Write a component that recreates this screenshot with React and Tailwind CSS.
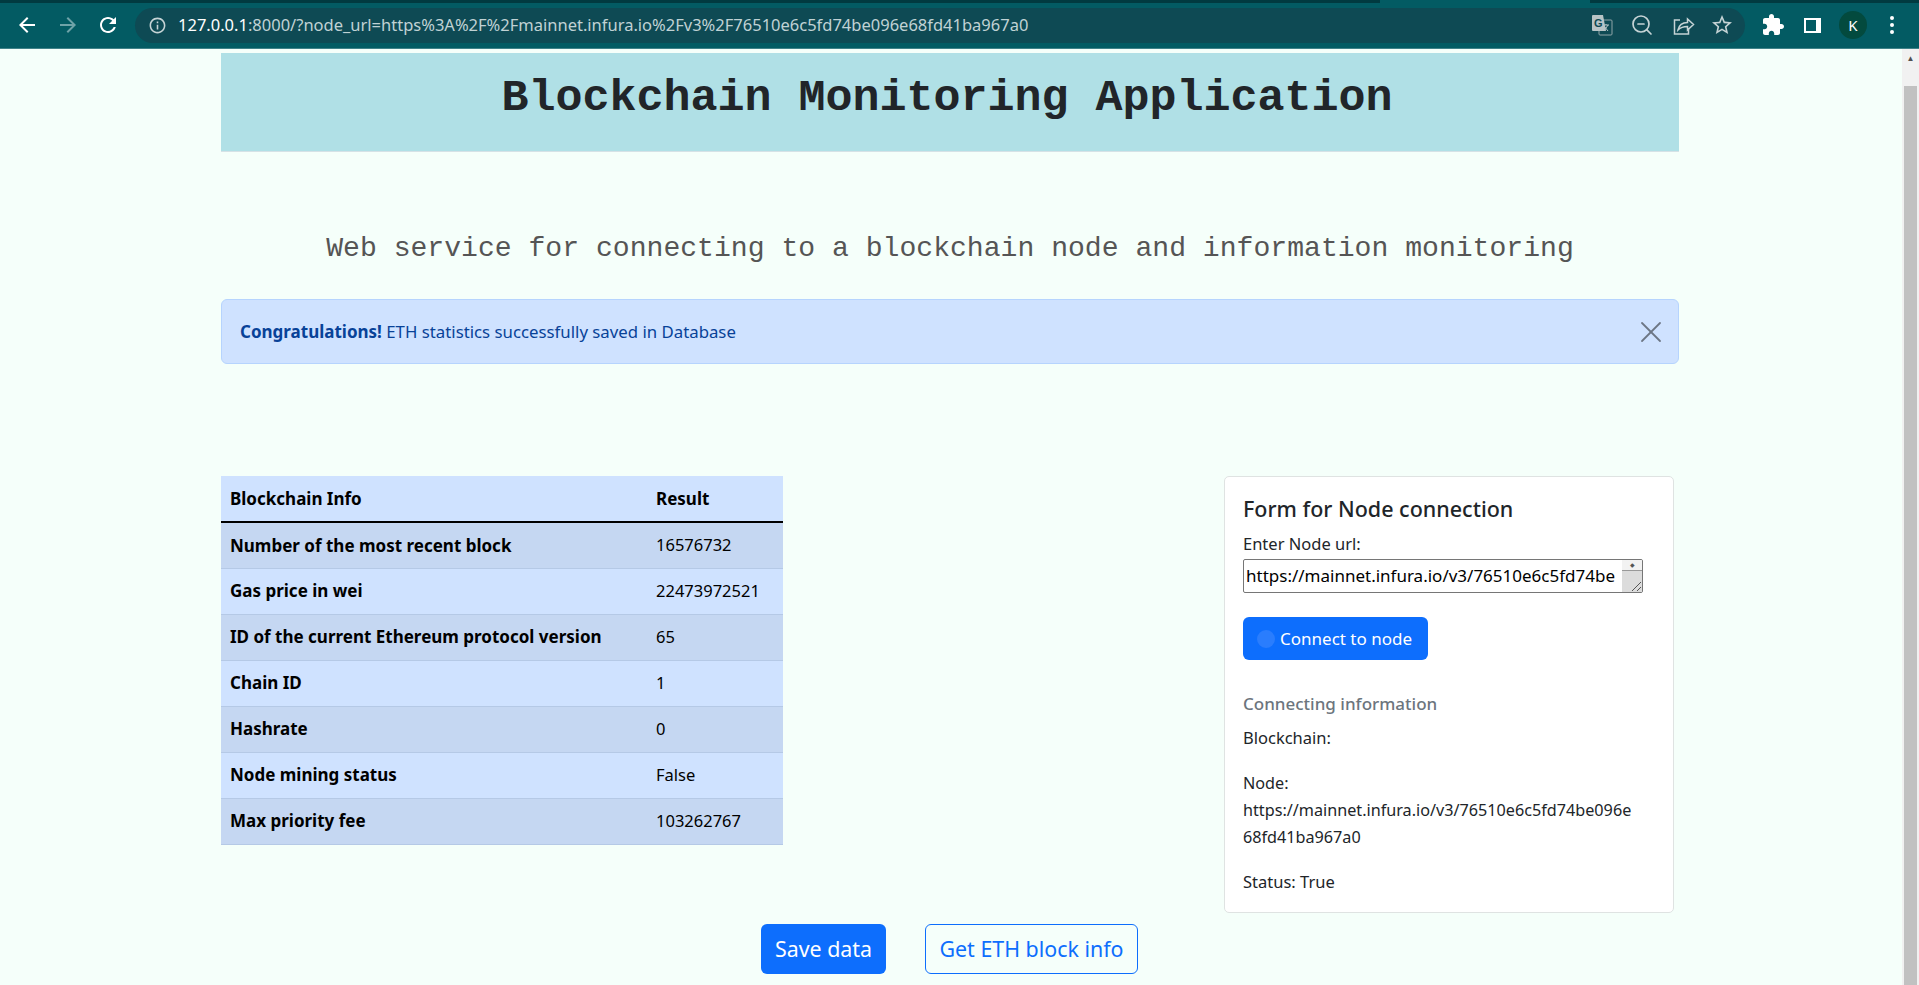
import React from 'react';
import { ZoomOut, X } from 'lucide-react';

const rows = [
    ['Number of the most recent block', '16576732'],
    ['Gas price in wei', '22473972521'],
    ['ID of the current Ethereum protocol version', '65'],
    ['Chain ID', '1'],
    ['Hashrate', '0'],
    ['Node mining status', 'False'],
    ['Max priority fee', '103262767'],
];

const Glyph = ({ d, className }) => (
    <svg viewBox="0 0 24 24" fill="currentColor" className={className}>
        <path d={d} />
    </svg>
);

const TranslateIcon = () => (
    <svg viewBox="0 0 24 24" className="ml-[0px] w-[24px] h-[24px]">
        <rect x="9" y="7" width="13" height="15" rx="1" fill="none" stroke="#8fa5a8" strokeWidth="1" />
        <path d="M13 12h6M16 11v1M14 18l4-6M14 13l4 5" fill="none" stroke="#b5c4c6" strokeWidth="1" />
        <path d="M3 2h10l3 16H3a1 1 0 0 1-1-1V3a1 1 0 0 1 1-1z" fill="#b8c4c6" />
        <text x="4" y="14" fontSize="11" fontWeight="700" fill="#0e4a54" fontFamily="'Liberation Sans', sans-serif">G</text>
    </svg>
);

const ShareIcon = () => (
    <svg viewBox="0 0 24 24" fill="none" stroke="currentColor" strokeWidth="1.5" className="ml-[17px] w-[24px] h-[24px]">
        <path d="M9 7H3.500v14h14v-5" />
        <path d="M7 17c1-5 4.500-7.500 9.500-7.500V6l6 5.500-6 5.500v-3.500c-4 0-7 1-9.500 3.500z" />
    </svg>
);

const Toolbar = () => (
    <div className="h-[49px] shrink-0 bg-[#035b63] flex flex-col border-b border-[#3f8289]">
        <div className="h-[3px] flex">
            <div className="w-[1380px] bg-[#013a40]" />
            <div className="w-[210px]" />
            <div className="flex-1 bg-[#013a40]" />
        </div>
        <div className="h-[40px] mt-[2px] flex items-center text-white">
            <Glyph className="ml-[15px] w-[24px] h-[24px]" d="M20 11H7.830l5.590-5.590L12 4l-8 8 8 8 1.410-1.410L7.830 13H20v-2z" />
            <Glyph className="ml-[17px] w-[24px] h-[24px] text-[#6fa3a8]" d="M12 4l-1.410 1.410L16.170 11H4v2h12.170l-5.580 5.590L12 20l8-8z" />
            <Glyph className="ml-[16px] w-[24px] h-[24px]" d="M17.650 6.350C16.200 4.900 14.210 4 12 4c-4.420 0-7.990 3.580-7.990 8s3.570 8 7.990 8c3.730 0 6.840-2.550 7.730-6h-2.080c-.82 2.330-3.040 4-5.650 4-3.310 0-6-2.690-6-6s2.690-6 6-6c1.660 0 3.140.69 4.220 1.780L13 11h7V4l-2.350 2.350z" />
            <div className="ml-[15px] w-[1610px] h-[35px] rounded-full bg-[#0e4a54] flex items-center pl-[13px] pr-[11px]">
                <Glyph className="w-[19px] h-[19px] text-[#c5d3d5]" d="M11 7h2v2h-2zm0 4h2v6h-2zm1-9C6.480 2 2 6.480 2 12s4.480 10 10 10 10-4.480 10-10S17.520 2 12 2zm0 18c-4.410 0-8-3.590-8-8s3.590-8 8-8 8 3.590 8 8-3.590 8-8 8z" />
                <span className="ml-[11px] text-[16.500px] text-[#c0d2d4]"><span className="text-white">127.0.0.1</span>:8000/?node_url=https%3A%2F%2Fmainnet.infura.io%2Fv3%2F76510e6c5fd74be096e68fd41ba967a0</span>
                <div className="ml-auto flex items-center text-[#c5d3d5]">
                    <TranslateIcon />
                    <ZoomOut className="ml-[16px] w-[24px] h-[24px]" strokeWidth={1.700} />
                    <ShareIcon />
                    <Glyph className="ml-[15px] w-[24px] h-[24px]" d="M22 9.240l-7.190-.62L12 2 9.190 8.630 2 9.240l5.460 4.730L5.820 21 12 17.270 18.180 21l-1.630-7.030L22 9.240zM12 15.400l-3.760 2.270 1-4.280-3.320-2.880 4.380-.38L12 6.100l1.710 4.040 4.380.38-3.320 2.880 1 4.280L12 15.400z" />
                </div>
            </div>
            <Glyph className="ml-[16px] w-[24px] h-[24px]" d="M20.500 11H19V7c0-1.100-.9-2-2-2h-4V3.500C13 2.120 11.880 1 10.500 1S8 2.120 8 3.500V5H4c-1.100 0-1.990.9-1.990 2v3.800H3.500c1.490 0 2.700 1.210 2.700 2.700s-1.210 2.700-2.700 2.700H2V20c0 1.100.9 2 2 2h3.800v-1.500c0-1.490 1.210-2.700 2.700-2.700 1.490 0 2.700 1.210 2.700 2.700V22H17c1.100 0 2-.9 2-2v-4h1.500c1.380 0 2.500-1.120 2.500-2.500S21.880 11 20.500 11z" />
            <div className="ml-[19px] w-[17px] h-[15px] bg-white flex items-center"><div className="w-[10px] h-[11px] ml-[2px] bg-[#035b63]" /></div>
            <div className="ml-[18px] w-[28px] h-[28px] rounded-full bg-[#034a3e] flex items-center justify-center text-[15px]">K</div>
            <div className="ml-[23px] flex flex-col gap-[3px]">
                <span className="w-[4px] h-[4px] rounded-full bg-white" />
                <span className="w-[4px] h-[4px] rounded-full bg-white" />
                <span className="w-[4px] h-[4px] rounded-full bg-white" />
            </div>
        </div>
    </div>
);

const NodeCard = () => (
    <div className="w-[450px] h-[437px] mr-[5px] bg-white border border-[#dfe3e2] rounded-[5px] px-[18px] pt-[20px] text-[16.500px] text-[#212529]">
        <h5 className="text-[21.500px] leading-[24px] font-medium">Form for Node connection</h5>
        <div className="mt-[11px] leading-[24px]">Enter Node url:</div>
        <div className="mt-[3px] w-[400px] h-[34px] border border-[#767676] rounded-[2px] flex items-center pl-[2px] overflow-hidden relative">
            <span className="text-[17px] text-black whitespace-nowrap">https://mainnet.infura.io/v3/76510e6c5fd74be</span>
            <div className="absolute right-0 top-0 w-[20px] h-full bg-[#dcdcdc]">
                <div className="h-[11px] bg-[#f2f2f2] border-b border-[#999] flex justify-center text-[6px] leading-[11px] text-[#555]">◆</div>
                <svg viewBox="0 0 12 12" className="absolute right-0 bottom-0 w-[12px] h-[12px]" stroke="#555" strokeWidth="1">
                    <path d="M2 11 11 2M7 11l4-4" />
                </svg>
            </div>
        </div>
        <button className="mt-[24px] h-[43px] w-[185px] bg-[#0d6efd] text-white rounded-[6px] flex items-center pl-[14px] text-[17px]">
            <span className="w-[18px] h-[18px] rounded-full bg-[#2a7dfd] mr-[5px]" />Connect to node
        </button>
        <h6 className="mt-[34px] text-[17px] leading-[19px] font-medium text-[#6c757d]">Connecting information</h6>
        <p className="mt-[13px] leading-[24px]">Blockchain:</p>
        <p className="mt-[20px] text-[16.200px] leading-[27px]">Node:<br />https://mainnet.infura.io/v3/76510e6c5fd74be096e<br />68fd41ba967a0</p>
        <p className="mt-[19px] leading-[24px]">Status: True</p>
    </div>
);

export default function App() {
    return (
        <div className="h-screen overflow-hidden flex flex-col bg-[#f5fffa] font-['Noto_Sans',sans-serif]">
            <Toolbar />
            <div className="flex-1 flex min-h-0">
                <div className="flex-1 pl-[221px] pr-[223px] pt-[4px]">
                    <div className="h-[99px] bg-[#b0e0e6] border-b border-[#d5e2e6] pt-[21px] pr-[6px] text-center text-[45px] leading-[50px] font-bold text-[#212529] font-['Liberation_Mono',monospace]">Blockchain Monitoring Application</div>
                    <p className="mt-[80px] text-center text-[28.100px] leading-[34px] text-[#555] font-['Liberation_Mono',monospace]">Web service for connecting to a blockchain node and information monitoring</p>
                    <div className="mt-[33px] h-[65px] bg-[#cfe2ff] border border-[#b6d4fe] rounded-[6px] flex items-center pl-[18px] pr-[9px] text-[16.800px] text-[#084298]">
                        <span><strong className="text-[17px] font-bold">Congratulations!</strong> ETH statistics successfully saved in Database</span>
                        <X className="ml-auto w-[36px] h-[36px] text-[#6c7584]" strokeWidth={1.200} />
                    </div>
                    <div className="mt-[112px] flex justify-between items-start">
                        <table className="w-[562px] bg-[#cfe2ff] text-[16.500px] text-black border-collapse">
                            <thead>
                                <tr className="h-[46px] border-b-2 border-black text-[17px] font-bold">
                                    <th className="pl-[9px] text-left">Blockchain Info</th>
                                    <th className="pl-[9px] text-left w-[136px]">Result</th>
                                </tr>
                            </thead>
                            <tbody>
                                {rows.map(([name, value], i) => (
                                    <tr key={name} className={`h-[46px] border-b border-[#b5c9e6] ${i % 2 === 0 ? 'bg-[#c5d7f2]' : ''}`}>
                                        <th className="pl-[9px] text-left text-[17px] font-bold">{name}</th>
                                        <td className="pl-[9px]">{value}</td>
                                    </tr>
                                ))}
                            </tbody>
                        </table>
                        <NodeCard />
                    </div>
                    <div className="flex pl-[540px] gap-[39px]">
                        <button className="mt-[11px] w-[125px] h-[50px] bg-[#0d6efd] text-white rounded-[6px] text-[21.400px]">Save data</button>
                        <button className="mt-[11px] w-[213px] h-[50px] border border-[#0d6efd] text-[#0d6efd] rounded-[6px] text-[21.400px]">Get ETH block info</button>
                    </div>
                </div>
                <div className="w-[17px] shrink-0 bg-[#f1f1f1] flex flex-col">
                    <div className="h-[17px] flex items-center justify-center text-[#505050] text-[8px]">▲</div>
                    <div className="mt-[20px] flex-1 mx-[2px] bg-[#c1c1c1]" />
                </div>
            </div>
        </div>
    );
}
